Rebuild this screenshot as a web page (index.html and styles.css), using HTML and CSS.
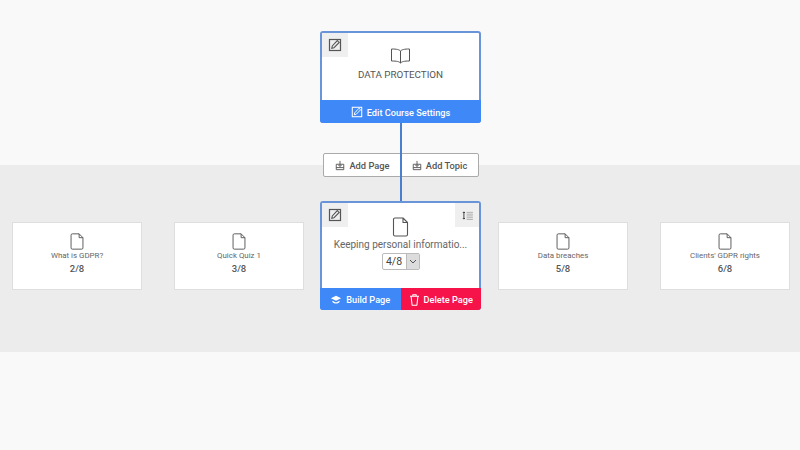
FILE: index.html
```html
<!DOCTYPE html>
<html lang="en">
<head>
    <meta charset="UTF-8">
    <meta name="viewport" content="width=device-width, initial-scale=1.0">
    <title>Course structure</title>
    <link rel="stylesheet" href="styles.css">
</head>
<body>
    <svg class="icon-defs" width="0" height="0">
        <defs>
            <symbol id="i-edit" viewBox="0 0 14 14">
                <rect x="1.500" y="1.500" width="11" height="11" fill="none" stroke="currentColor" stroke-width="1.200"/>
                <path d="M3.800 10.200l.5-2.200 5-5.400 1.900 1.800-5.200 5.300z" fill="none" stroke="currentColor" stroke-width="1.100"/>
            </symbol>
            <symbol id="i-file" viewBox="0 0 16 20">
                <path d="M2.500 1h8L15 5.500V17.500a1.500 1.500 0 0 1-1.500 1.500H2.500A1.500 1.500 0 0 1 1 17.500V2.500A1.500 1.500 0 0 1 2.500 1zM10.500 1v4.500H15" fill="none" stroke="currentColor" stroke-width="1.100" stroke-linejoin="round"/>
            </symbol>
            <symbol id="i-add" viewBox="0 0 12 12">
                <path d="M1.500 4.500h9v6.500h-9zM6 .5v6.500M4 5.300l2 2 2-2M1.500 8.500h9" fill="none" stroke="currentColor" stroke-width="1.100"/>
            </symbol>
        </defs>
    </svg>

    <main class="tree">
        <div class="connector"></div>

        <section class="course-area">
            <div class="card course-card">
                <a class="corner-btn"><svg class="icon-edit"><use href="#i-edit"/></svg></a>
                <div class="card-body">
                    <svg class="icon-book" viewBox="0 0 20 16">
                        <path d="M10 3C8.500 1.600 6.500 1 1 1v12c5.500 0 7.500.6 9 2 1.500-1.400 3.500-2 9-2V1c-5.500 0-7.500.6-9 2zM10 3v12" fill="none" stroke="currentColor" stroke-width="1" stroke-linejoin="round"/>
                    </svg>
                    <div class="course-title">DATA PROTECTION</div>
                </div>
                <a class="action action-blue action-single"><svg class="icon-action"><use href="#i-edit"/></svg>Edit Course Settings</a>
            </div>
        </section>

        <div class="add-group">
            <a class="add-btn"><svg class="icon-add"><use href="#i-add"/></svg>Add Page</a>
            <a class="add-btn"><svg class="icon-add"><use href="#i-add"/></svg>Add Topic</a>
        </div>

        <section class="pages-band">
            <div class="page-card page-first">
                <svg class="icon-file"><use href="#i-file"/></svg>
                <div class="page-name">What is GDPR?</div>
                <div class="page-num">2/8</div>
            </div>
            <div class="page-card page-second">
                <svg class="icon-file"><use href="#i-file"/></svg>
                <div class="page-name">Quick Quiz 1</div>
                <div class="page-num">3/8</div>
            </div>

            <div class="card current-card">
                <div class="corner-row">
                    <a class="corner-btn"><svg class="icon-edit"><use href="#i-edit"/></svg></a>
                    <a class="corner-btn corner-btn-sort">
                        <svg class="icon-sort" viewBox="0 0 12 10">
                            <path d="M2 1v8M.8 2.200 2 1l1.200 1.200M.8 7.800 2 9l1.200-1.200" fill="none" stroke="#333" stroke-width="1"/>
                            <path d="M5 1.500h7M5 3.500h7M5 5.500h7M5 7.500h7M5 9.500h7" fill="none" stroke="#999" stroke-width=".8"/>
                        </svg>
                    </a>
                </div>
                <div class="current-body">
                    <svg class="icon-file-lg"><use href="#i-file"/></svg>
                    <div class="current-name">Keeping personal informatio...</div>
                    <div class="fake-select">
                        <span class="fake-value">4/8</span>
                        <span class="fake-arrow">
                            <svg width="8" height="5" viewBox="0 0 8 5"><path d="M1 1l3 3 3-3" fill="none" stroke="#555" stroke-width="1"/></svg>
                        </span>
                    </div>
                </div>
                <div class="action-row">
                    <a class="action action-blue">
                        <svg class="icon-action" viewBox="0 0 14 12">
                            <path d="M7 1 13 4 7 7 1 4z" fill="currentColor"/>
                            <path d="M2.800 6.800v1.400c2.400 2.400 6 2.400 8.400 0V6.800L7 8.800z" fill="currentColor"/>
                        </svg>
                        Build Page
                    </a>
                    <a class="action action-red">
                        <svg class="icon-trash" viewBox="0 0 12 14">
                            <path d="M.8 2.500h10.400M4 2.500V1h4v1.500M2 2.500 3.200 13h5.600L10 2.500" fill="none" stroke="currentColor" stroke-width="1.200" stroke-linejoin="round"/>
                        </svg>
                        Delete Page
                    </a>
                </div>
            </div>

            <div class="page-card page-fifth">
                <svg class="icon-file"><use href="#i-file"/></svg>
                <div class="page-name">Data breaches</div>
                <div class="page-num">5/8</div>
            </div>
            <div class="page-card">
                <svg class="icon-file"><use href="#i-file"/></svg>
                <div class="page-name">Clients' GDPR rights</div>
                <div class="page-num">6/8</div>
            </div>
        </section>
    </main>
</body>
</html>
```

FILE: styles.css
```css
* {
    margin: 0;
    padding: 0;
    box-sizing: border-box;
}

html, body {
    height: 100%;
    overflow: hidden;
}

body {
    font-family: Roboto, "Liberation Sans", sans-serif;
    background: #f9f9f9;
    color: #444;
}

.icon-defs {
    position: absolute;
}

.tree {
    position: relative;
    height: 450px;
}

/* line from the course card down to the current page */
.connector {
    position: absolute;
    left: 400px;
    top: 123px;
    width: 2px;
    height: 78px;
    background: #4a7fd0;
    z-index: 2;
}

.course-area {
    height: 165px;
    padding: 31px 0 0 320px;
}

.card {
    width: 161px;
    background: #fff;
    border: 2px solid #6a94d8;
    border-radius: 3px;
    display: flex;
    flex-direction: column;
    position: relative;
    z-index: 3;
}

.course-card {
    height: 92px;
}

.corner-btn {
    width: 26px;
    height: 24px;
    background: #efefef;
    display: flex;
    align-items: center;
    justify-content: center;
    color: #555;
}

.corner-btn-sort {
    width: 24px;
}

.course-card .corner-btn {
    position: absolute;
    left: 0;
    top: 0;
}

.icon-edit {
    width: 14px;
    height: 14px;
}

.card-body {
    flex: 1;
    display: flex;
    flex-direction: column;
    align-items: center;
    padding-top: 15px;
}

.icon-book {
    width: 21px;
    height: 16px;
    color: #555;
}

.course-title {
    margin-top: 5px;
    font-size: 9.800px;
    color: #555;
}

.action {
    height: 22px;
    padding-top: 1px;
    display: flex;
    align-items: center;
    justify-content: center;
    gap: 4px;
    color: #fff;
    font-size: 9.200px;
    font-weight: 500;
}

.action-single {
    margin: 0 -2px -2px;
    height: 23px;
    border-radius: 0 0 3px 3px;
}

.action-blue {
    background: #3f88f8;
}

.action-red {
    background: #f5134a;
}

.icon-action {
    width: 12px;
    height: 12px;
}

.icon-trash {
    width: 11px;
    height: 12px;
}

.add-group {
    position: absolute;
    left: 323px;
    top: 153px;
    width: 156px;
    height: 24px;
    display: flex;
    background: #fff;
    border: 1px solid #aaa;
    border-radius: 2px;
    z-index: 1;
}

.add-btn {
    flex: 1;
    display: flex;
    align-items: center;
    justify-content: center;
    gap: 4px;
    padding-top: 1px;
    font-size: 9.300px;
    font-weight: 500;
    color: #555;
}

.icon-add {
    width: 10px;
    height: 11px;
}

.pages-band {
    height: 187px;
    padding: 36px 0 42px 12px;
    background: #ececec;
    display: flex;
    align-items: center;
}

.page-card {
    width: 130px;
    height: 68px;
    background: #fff;
    border: 1px solid #dedede;
    display: flex;
    flex-direction: column;
    align-items: center;
    padding-top: 10px;
}

.page-first,
.page-fifth {
    margin-right: 32px;
}

.page-second {
    margin-right: 16px;
}

.icon-file {
    width: 14px;
    height: 17px;
    color: #555;
}

.page-name {
    margin-top: 1px;
    font-size: 7.900px;
    color: #666;
}

.page-num {
    margin-top: 3px;
    font-size: 9.500px;
    font-weight: 500;
    color: #555;
}

.current-card {
    height: 109px;
    margin-right: 17px;
}

.corner-row {
    display: flex;
    justify-content: space-between;
}

.icon-sort {
    width: 11px;
    height: 9px;
}

.current-body {
    flex: 1;
    margin-top: -10px;
    display: flex;
    flex-direction: column;
    align-items: center;
}

.icon-file-lg {
    width: 17px;
    height: 20px;
    color: #555;
}

.current-name {
    margin-top: 2px;
    font-size: 10px;
    color: #666;
}

.fake-select {
    margin-top: 3px;
    display: flex;
    width: 38px;
    height: 17px;
    border: 1px solid #bbb;
    border-radius: 2px;
    font-size: 10.500px;
}

.fake-value {
    flex: 1;
    display: flex;
    align-items: center;
    justify-content: center;
    color: #444;
}

.fake-arrow {
    width: 13px;
    display: flex;
    align-items: center;
    justify-content: center;
    background: #dcdcdc;
    border-left: 1px solid #bbb;
}

.action-row {
    display: flex;
    margin: 0 -2px -2px;
}

.action-row .action {
    flex: 1;
}

.action-row .action-blue {
    border-radius: 0 0 0 3px;
}

.action-row .action-red {
    border-radius: 0 0 3px 0;
}
```
